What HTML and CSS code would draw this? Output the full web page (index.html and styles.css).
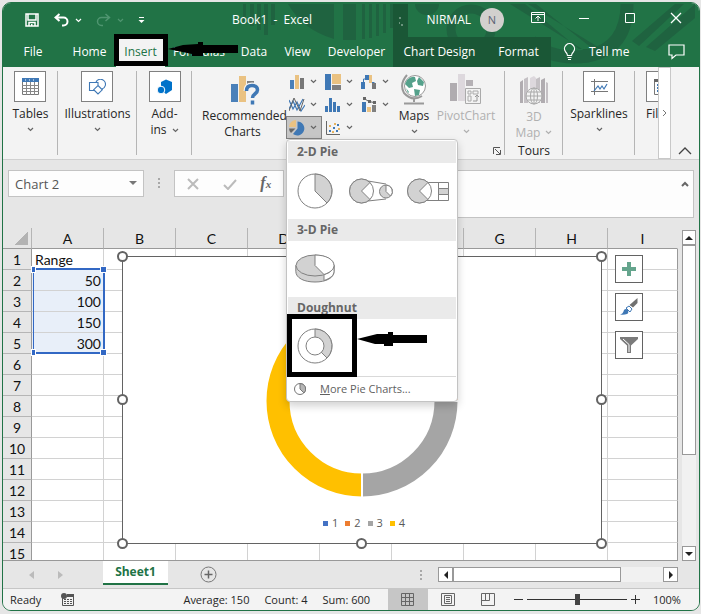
FILE: index.html
```html
<!DOCTYPE html>
<html lang="en">
<head>
<meta charset="utf-8">
<title>Book1 - Excel</title>
<link rel="stylesheet" href="styles.css">
</head>
<body>
<svg class="defs" aria-hidden="true">
  <symbol id="chev" viewBox="0 0 7 5"><path d="M1 1l2.500 2.500L6 1" fill="none" stroke="currentColor" stroke-width="1.200"/></symbol>
</svg>
<div class="window">
  <header class="top">
    <svg class="pattern" width="456" height="64" viewBox="0 0 456 64" aria-hidden="true">
      <g fill="#1f6340">
        <path d="M0 1h3v17H0zM7 1h4v22H7zM14 1h4v26h-4zM21 1h4v31h-4zM28 1h4v21h-4z"/>
        <path d="M45 1h46v35Q60 27 45 1zM100 1h13v36h-13zM119 1h3v35h-3zM126 1h3v34h-3zM133 1h3v32h-3zM140 1h3v29h-3zM147 1h3v24h-3zM154 1h3v15h-3z"/>
        <path d="M172 1h24a12 11 0 0 1-24 0z"/>
        <path d="M267 1h18l70 43v12zM282 1l54 45h14L293 1zM389 38L432 1h9l-45 42zM403 44L452 1v14L412 48z"/>
      </g>
      <circle cx="228" cy="26" r="20" fill="none" stroke="#1f6340" stroke-width="9"/>
      <path d="M384 1Q384 45 345 53Q308 58 288 38" fill="none" stroke="#1f6340" stroke-width="13"/>
      <path d="M150 1h15v33h-15z" fill="#1a5736"/>
      <path d="M156 15h2M156 20h1M158 22h2" stroke="#b8d0c2"/>
    </svg>
    <div class="titlebar">
      <div class="quick">
        <button aria-label="Save"><svg width="14" height="14" viewBox="0 0 14 14"><path d="M1 1h12v12H1zM3 1v6h8V1M4 13V9.500h6V13" fill="none" stroke="#fff" stroke-width="1.500"/><path d="M6 11h1.500v2H6z" fill="#fff"/></svg></button>
        <button class="undo" aria-label="Undo"><svg width="15" height="14" viewBox="0 0 15 14"><path d="M5.500 1L1.500 4.500l4 3.500M2 4.500h7.500a4 4 0 0 1 0 8H8" fill="none" stroke="#fff" stroke-width="2"/></svg><svg width="7" height="5"><use href="#chev"/></svg></button>
        <button class="undo redo" aria-label="Redo"><svg width="15" height="14" viewBox="0 0 15 14"><path d="M9.500 1l4 3.500-4 3.500M13 4.500H5.500a4 4 0 0 0 0 8H7" fill="none" stroke="currentColor" stroke-width="1.500"/></svg><svg width="7" height="5"><use href="#chev"/></svg></button>
        <button aria-label="Customize Quick Access Toolbar"><svg width="7" height="8" viewBox="0 0 7 8"><path d="M1 1.500h5" stroke="#fff"/><path d="M.5 4h6l-3 3z" fill="#fff"/></svg></button>
      </div>
      <h1 class="title">Book1&nbsp; - &nbsp;Excel</h1>
      <button class="account">NIRMAL <span class="avatar">N</span></button>
      <div class="controls">
        <button aria-label="Ribbon display options"><svg width="14" height="12" viewBox="0 0 14 12"><path d="M.5.5h13v10H.5zM.5 2.500h13M7 9V4M4.500 6.500L7 4l2.500 2.500" fill="none" stroke="#fff"/></svg></button>
        <button aria-label="Minimize"><svg width="12" height="12"><path d="M1 6.500h10" stroke="#fff"/></svg></button>
        <button aria-label="Maximize"><svg width="12" height="12"><path d="M1.500 1.500h9v9h-9z" fill="none" stroke="#fff"/></svg></button>
        <button aria-label="Close"><svg width="12" height="12"><path d="M1 1l10 10M11 1L1 11" stroke="#fff" stroke-width="1.300"/></svg></button>
      </div>
    </div>
    <nav class="tabs">
      <button>File</button><button>Home</button><button class="active">Insert</button><button>Formulas</button><button>Data</button><button>View</button><button>Developer</button><button class="context">Chart Design</button><button class="context">Format</button>
      <button class="tell"><svg width="13" height="18" viewBox="0 0 13 18"><path d="M4.500 12.500q0-2-2-3.800A5 5 0 1 1 10.500 8.700q-2 1.800-2 3.800zM4.500 14.500h4M5 16.500h3" fill="none" stroke="#fff" stroke-width="1.200"/></svg>Tell me</button>
      <button class="comment" aria-label="Comments"><svg width="17" height="16" viewBox="0 0 17 16"><path d="M1 1h15v10H8l-4 3.500V11H1z" fill="none" stroke="#fff" stroke-width="1.200"/></svg></button>
    </nav>
    <div class="mark mark-tab"></div>
    <svg class="arrow arrow-tab" width="70" height="14" viewBox="0 0 70 14"><path d="M0 7l15-4 15-1V0h5v3h35v8H35v3H24v-2z"/></svg>
  </header>

  <section class="ribbon">
    <div class="group">
      <button class="big"><span class="tile"><svg width="17" height="17" viewBox="0 0 17 17"><path d="M.5.5h16v16H.5z" fill="#fff" stroke="#777"/><path d="M0 0h17v4H0z" fill="#3f78b5"/><path d="M4.500 4v13M8.500 4v13M12.500 4v13M0 7.500h17M0 10.500h17M0 13.500h17" stroke="#888"/><path d="M3 2h1M7 2h1M11 2h1" stroke="#fff"/></svg></span>Tables<svg width="7" height="5"><use href="#chev"/></svg></button>
    </div>
    <div class="group g-ill">
      <button class="big"><span class="tile"><svg width="18" height="16" viewBox="0 0 18 16"><path d="M6 11.500H1.500v-8H10V6M8 3a5 5 0 1 1 6 7M10 6.500l4.300 4.300L10 15l-4.300-4.300z" fill="none" stroke="#3f78b5" stroke-width="1.100"/></svg></span>Illustrations<svg width="7" height="5"><use href="#chev"/></svg></button>
    </div>
    <div class="group">
      <button class="big"><span class="tile"><svg width="16" height="16" viewBox="0 0 16 16"><path d="M4 3l5-2.500L15 3v8l-6 4-5-4z" fill="#0072c9"/><circle cx="4" cy="11" r="3.800" fill="#0072c9" stroke="#fff"/></svg></span>Add-<span class="inline">ins <svg width="7" height="5"><use href="#chev"/></svg></span></button>
    </div>
    <div class="group g-charts">
      <button class="big rec"><svg width="30" height="30" viewBox="0 0 30 30"><path d="M1 9h7v18H1z" fill="#4a80b9"/><path d="M9 1h7v26H9z" fill="#eac282"/><path d="M17 6h7v4h-7z" fill="#808080"/><path d="M16.500 16q0-5.500 5.500-5.500t5.500 4.500c0 4-5 3.500-5 8" fill="none" stroke="#f3f3f3" stroke-width="6"/><path d="M16.500 16q0-5.500 5.500-5.500t5.500 4.500c0 4-5 3.500-5 8M22.500 25.500v4" fill="none" stroke="#3f78b5" stroke-width="3.500"/></svg>Recommended<br>Charts</button>
      <div class="gallery">
        <button aria-label="Column chart"><svg width="16" height="16" viewBox="0 0 16 16"><path d="M1 6h4v9H1z" fill="#4a80b9"/><path d="M6 1h4v14H6z" fill="#eac282"/><path d="M11 4h4v11h-4z" fill="#777"/></svg><svg width="7" height="5"><use href="#chev"/></svg></button>
        <button aria-label="Hierarchy chart"><svg width="16" height="16" viewBox="0 0 16 16"><path d="M0 0h6v16H0z" fill="#3f78b5"/><path d="M7 0h9v10H7z" fill="#eac282"/><path d="M7 11h9v5H7z" fill="#808080"/></svg><svg width="7" height="5"><use href="#chev"/></svg></button>
        <button aria-label="Waterfall chart"><svg width="16" height="16" viewBox="0 0 16 16"><path d="M0 8h4v7H0z" fill="#3f78b5"/><path d="M2.500 8V5h3V1.500h5v7h3" fill="none" stroke="#3f78b5"/><path d="M4 1h4v5H4z" fill="#3f78b5"/><path d="M8 1h3v8H8z" fill="#eac282"/><path d="M11 9h4v6h-4z" fill="#777"/></svg><svg width="7" height="5"><use href="#chev"/></svg></button>
        <button aria-label="Line chart"><svg width="16" height="16" viewBox="0 0 16 16"><path d="M0 12l4-8 4 9 6-11M0 3l4 9 4-7 4 9 4-6" fill="none" stroke="#3f78b5" stroke-width="1.200"/><path d="M0 14L5 1l6 13 4-12" fill="none" stroke="#666"/></svg><svg width="7" height="5"><use href="#chev"/></svg></button>
        <button aria-label="Histogram chart"><svg width="16" height="16" viewBox="0 0 16 16"><path d="M0 9h3v6H0zM4 1h3v14H4zM8 5h3v10H8zM12 9h3v6h-3z" fill="#3f78b5"/></svg><svg width="7" height="5"><use href="#chev"/></svg></button>
        <button aria-label="Combo chart"><svg width="16" height="16" viewBox="0 0 16 16"><path d="M1 5h4v10H1z" fill="#3f78b5"/><path d="M6 10h4v5H6z" fill="#eac282"/><path d="M11 8h4v7h-4z" fill="#808080"/><path d="M3 1.500l5 3 5 1" fill="none" stroke="#666"/><path d="M2 0h3v3H2zM7 3h3v3H7zM12 4h3v3h-3z" fill="#666"/></svg><svg width="7" height="5"><use href="#chev"/></svg></button>
        <button class="pressed" aria-label="Pie chart"><svg width="16" height="16" viewBox="0 0 16 16"><path d="M8 8V1a7 7 0 1 1-4.500 12.500z" fill="#3f78b5" transform="translate(.5 .5)"/><path d="M7 7V0a7 7 0 0 0-7 7z" fill="#eac282"/><path d="M6.500 8.500H0a7 7 0 0 0 2 4.500z" fill="#666"/></svg><svg width="7" height="5"><use href="#chev"/></svg></button>
        <button aria-label="Scatter chart"><svg width="16" height="16" viewBox="0 0 16 16"><path d="M1.500 1v13.500H15" fill="none" stroke="#666"/><path d="M4 10h2v2H4zM8 7h2v2H8zM11 10h2v2h-2zM12 4h2v2h-2z" fill="#3f78b5"/><path d="M4 5h2v2H4zM9 3h2v2H9zM7 11h2v2H7zM13 8h2v2h-2z" fill="#e6b35f"/></svg><svg width="7" height="5"><use href="#chev"/></svg></button>
        <div class="menu" role="menu">
          <h2>2-D Pie</h2>
          <div class="options">
            <button aria-label="Pie"><svg width="36" height="36" viewBox="0 0 36 36"><circle cx="18" cy="18" r="17" fill="#fff" stroke="#808080"/><path d="M18 18V1a17 17 0 0 1 12 29z" fill="#d2d2d2" stroke="#808080"/></svg></button>
            <button aria-label="Pie of Pie"><svg width="46" height="28" viewBox="0 0 46 28"><path d="M20 4l18 3M20 24l18-2" stroke="#808080"/><circle cx="13.500" cy="14" r="12" fill="#fff" stroke="#808080"/><path d="M13.500 14L22 5.500a12 12 0 1 0 0 17z" fill="#d2d2d2" stroke="#808080"/><circle cx="38" cy="14.500" r="6.500" fill="#d2d2d2" stroke="#808080"/><path d="M38 14.500V8a6.500 6.500 0 0 1 4.500 11z" fill="#fff" stroke="#808080"/></svg></button>
            <button aria-label="Bar of Pie"><svg width="44" height="28" viewBox="0 0 44 28"><path d="M20 5.500h22.500v18H20M32.500 5.500v18" fill="#fff" stroke="#808080"/><path d="M32.500 11.500h10v6h-10z" fill="#d2d2d2" stroke="#808080"/><circle cx="13.500" cy="14" r="12" fill="#fff" stroke="#808080"/><path d="M13.500 14L22 5.500a12 12 0 1 0 0 17z" fill="#d2d2d2" stroke="#808080"/></svg></button>
          </div>
          <h2>3-D Pie</h2>
          <div class="options">
            <button aria-label="3-D Pie"><svg class="pie3d" width="40" height="30" viewBox="0 0 40 30"><path d="M.8 11.500v6C1 24 9 28 20 28s19-4 19-10.500v-6z" fill="#d2d2d2" stroke="#808080"/><path d="M29 20v6.500c6-2 10-5 10-9v-6z" fill="#fff" stroke="#808080"/><ellipse cx="20" cy="11.500" rx="19" ry="10.500" fill="#d2d2d2" stroke="#808080"/><path d="M20 11.500V1c11 0 19 4.500 19 10.500 0 4-4 7-10 9z" fill="#fff" stroke="#808080"/></svg></button>
          </div>
          <h2>Doughnut</h2>
          <div class="options last">
            <button aria-label="Doughnut"><svg width="36" height="36" viewBox="0 0 36 36"><circle cx="18" cy="18" r="17" fill="#fff" stroke="#808080"/><path d="M18 18V1a17 17 0 0 1 12 29z" fill="#d2d2d2" stroke="#808080"/><circle cx="18" cy="18" r="9" fill="#fff" stroke="#808080"/></svg></button>
            <div class="mark mark-menu"></div>
            <svg class="arrow arrow-menu" width="70" height="14" viewBox="0 0 70 14"><path d="M0 7l20-5h11V0h5v3h34v8H36v3h-9v-2H18z"/></svg>
          </div>
          <button class="more"><svg width="12" height="12" viewBox="0 0 12 12"><circle cx="6" cy="6" r="5.500" fill="#fff" stroke="#777"/><path d="M6 6V.5a5.500 5.500 0 0 1 4 9.500z" fill="#b5b5b5" stroke="#777"/></svg><span><u>M</u>ore Pie Charts...</span></button>
        </div>
      </div>
      <button class="big maps"><svg width="26" height="32" viewBox="0 0 26 32"><circle cx="14" cy="13" r="10.500" fill="#fff" stroke="#999"/><path d="M6 7q4-4 8-3l1 4-4 2 1 4-4 1-4-4zM18 4l5 5-1 4-5-1-1-4zM13 16l6 1-1 5-4 1zM5 15l3 4-1 1z" fill="#55a18b"/><path d="M6 2Q-2 11 3 20q8 9 18 3M13 26v3M3 30.500h20" fill="none" stroke="#999" stroke-width="2"/></svg>Maps<svg width="7" height="5"><use href="#chev"/></svg></button>
      <button class="big pivot" disabled><svg width="32" height="32" viewBox="0 0 32 32"><path d="M0 10h7v18H0z" fill="#b0acb0"/><path d="M8 1h7v27H8z" fill="#ddd8dd"/><path d="M16 7h7v6h-7z" fill="#b5b1b5"/><path d="M15.500 15.500h15v15h-15z" fill="#f3f3f3" stroke="#aaa"/><path d="M18 18h3v3h-3zM23 18h5v3h-5zM18 23h3v5h-3z" fill="none" stroke="#aaa"/><path d="M23 28h4v-5M25 24l2-2 2 2" fill="none" stroke="#999"/></svg>PivotChart<svg width="7" height="5"><use href="#chev"/></svg></button>
      <button class="launcher" aria-label="See all charts"><svg width="8" height="8"><path d="M.5 7V.5H7M2 2l5 5M7.500 3v4.500H3" fill="none" stroke="#555"/></svg></button>
    </div>
    <div class="group g-tours">
      <button class="big tour" disabled><svg width="30" height="30" viewBox="0 0 30 30"><path d="M1 6l3-2v23H1zM22 4l4-2v25h-4z" fill="#b0acb0"/><path d="M5 3l4-2v26H5zM17 3l4-2v26h-4zM27 6l2 1v20h-2z" fill="#c4c0c4"/><path d="M11 2l4-2 2 2v25h-6z" fill="#ddd8dd"/><circle cx="15" cy="20" r="8" fill="#f3f3f3" stroke="#aaa"/><ellipse cx="15" cy="20" rx="3.500" ry="8" fill="none" stroke="#aaa"/><path d="M7 20h16M8.500 16h13M8.500 24h13M15 12v16" stroke="#aaa"/></svg>3D<span class="inline">Map <svg width="7" height="5"><use href="#chev"/></svg></span></button>
      <span class="caption">Tours</span>
    </div>
    <div class="group g-spark">
      <button class="big"><span class="tile"><svg width="17" height="16" viewBox="0 0 17 16"><path d="M3.500 0v16M0 2.500h17M0 12.500h17" stroke="#777"/><path d="M3 12l4-5 2 3 2-3 2 3 3-5" fill="none" stroke="#3f78b5" stroke-width="1.200"/></svg></span>Sparklines<svg width="7" height="5"><use href="#chev"/></svg></button>
    </div>
    <div class="group g-filter">
      <button class="big"><span class="tile"><svg width="16" height="16" viewBox="0 0 16 16"><path d="M.5.5h15v15H.5z" fill="#fff" stroke="#777"/><path d="M0 0h16v3H0z" fill="#666"/><path d="M3 5h9v2H3zM3 8h9v2H3zM3 11h9v2H3z" fill="#3f78b5"/></svg></span>Fil</button>
    </div>
    <button class="scroller" aria-label="Scroll ribbon right"><svg width="5" height="8"><path d="M1 1l3 3-3 3" fill="none" stroke="#777"/></svg></button>
    <button class="collapse" aria-label="Collapse ribbon"><svg width="14" height="8"><path d="M1 7l6-6 6 6" fill="none" stroke="#444" stroke-width="1.300"/></svg></button>
  </section>

  <section class="formula">
    <button class="namebox">Chart 2 <svg width="8" height="5"><path d="M0 0h8L4 4z" fill="#777"/></svg></button>
    <span class="dots"></span>
    <div class="fxbox">
      <button aria-label="Cancel"><svg width="12" height="12"><path d="M1 1l10 10M11 1L1 11" stroke="#bbb" stroke-width="2"/></svg></button>
      <button aria-label="Enter"><svg width="14" height="12"><path d="M1 7l4 4 8-9" fill="none" stroke="#bbb" stroke-width="2"/></svg></button>
      <button class="fx" aria-label="Insert function">f<small>x</small></button>
    </div>
    <div class="entry"><input aria-label="Formula bar"><svg width="8" height="6"><path d="M1 5l3-3 3 3" fill="none" stroke="#666" stroke-width="2"/></svg></div>
  </section>

  <main class="work">
    <div class="sheet">
      <table>
        <colgroup><col class="rowcol"><col><col><col><col><col><col><col><col><col class="lastcol"></colgroup>
        <thead><tr><th class="corner" aria-label="Select all"></th><th>A</th><th>B</th><th>C</th><th>D</th><th>E</th><th>F</th><th>G</th><th>H</th><th>I</th></tr></thead>
        <tbody>
          <tr><th>1</th><td class="text">Range</td><td></td><td></td><td></td><td></td><td></td><td></td><td></td><td></td></tr>
          <tr><th>2</th><td class="sel">50</td><td></td><td></td><td></td><td></td><td></td><td></td><td></td><td></td></tr>
          <tr><th>3</th><td class="sel">100</td><td></td><td></td><td></td><td></td><td></td><td></td><td></td><td></td></tr>
          <tr><th>4</th><td class="sel">150</td><td></td><td></td><td></td><td></td><td></td><td></td><td></td><td></td></tr>
          <tr><th>5</th><td class="sel">300</td><td></td><td></td><td></td><td></td><td></td><td></td><td></td><td></td></tr>
          <tr><th>6</th><td></td><td></td><td></td><td></td><td></td><td></td><td></td><td></td><td></td></tr>
          <tr><th>7</th><td></td><td></td><td></td><td></td><td></td><td></td><td></td><td></td><td></td></tr>
          <tr><th>8</th><td></td><td></td><td></td><td></td><td></td><td></td><td></td><td></td><td></td></tr>
          <tr><th>9</th><td></td><td></td><td></td><td></td><td></td><td></td><td></td><td></td><td></td></tr>
          <tr><th>10</th><td></td><td></td><td></td><td></td><td></td><td></td><td></td><td></td><td></td></tr>
          <tr><th>11</th><td></td><td></td><td></td><td></td><td></td><td></td><td></td><td></td><td></td></tr>
          <tr><th>12</th><td></td><td></td><td></td><td></td><td></td><td></td><td></td><td></td><td></td></tr>
          <tr><th>13</th><td></td><td></td><td></td><td></td><td></td><td></td><td></td><td></td><td></td></tr>
          <tr><th>14</th><td></td><td></td><td></td><td></td><td></td><td></td><td></td><td></td><td></td></tr>
          <tr><th>15</th><td></td><td></td><td></td><td></td><td></td><td></td><td></td><td></td><td></td></tr>
        </tbody>
      </table>
      <div class="range"><i></i><i></i><i></i><i></i></div>
      <div class="chart">
        <svg class="ring" width="194" height="194" viewBox="-97 -97 194 194" role="img" aria-label="Doughnut chart">
          <g fill="none" stroke-width="23">
            <path d="M0 -84A84 84 0 0 1 42 -72.700" stroke="#4472c4"/>
            <path d="M42 -72.700A84 84 0 0 1 84 0" stroke="#ed7d31"/>
            <path d="M84 0A84 84 0 0 1 0 84" stroke="#a5a5a5"/>
            <path d="M0 84A84 84 0 0 1 0 -84" stroke="#ffc000"/>
          </g>
          <path d="M0 70v27M0-70v-27M70 0h27M36-62l12-21" stroke="#fff" stroke-width="2"/>
        </svg>
        <ul class="legend"><li class="c1">1</li><li class="c2">2</li><li class="c3">3</li><li class="c4">4</li></ul>
        <b class="h tl"></b><b class="h tr"></b><b class="h ml"></b><b class="h mr"></b><b class="h bl"></b><b class="h bm"></b><b class="h br"></b>
        <div class="side">
          <button aria-label="Chart elements"><svg width="14" height="14"><path d="M5 0h4v5h5v4H9v5H5V9H0V5h5z" fill="#65a58d"/></svg></button>
          <button aria-label="Chart styles"><svg width="18" height="18" viewBox="0 0 18 18"><path d="M17.500 0v5L13 9.500 9.500 7z" fill="#707070"/><path d="M9 8l3 3-2 3-4-4z" fill="#fff" stroke="#3f78b5"/><path d="M0 16.500q3-.5 4-4.500 2-2 4 0 1 3-1 4-3 1-7 .5z" fill="#3f78b5"/></svg></button>
          <button aria-label="Chart filters"><svg width="18" height="17" viewBox="0 0 18 17"><path d="M0 0h18v2l-7 6.500V16H7V8.500L0 2z" fill="#7b7b7b"/><path d="M3 2l6 5.500V15" fill="none" stroke="#fff"/></svg></button>
        </div>
      </div>
    </div>
    <div class="vscroll">
      <button aria-label="Scroll up"><svg width="8" height="4"><path d="M0 4l4-4 4 4z" fill="#222"/></svg></button>
      <div class="vthumb"></div><div class="track"></div>
      <button aria-label="Scroll down"><svg width="8" height="4"><path d="M0 0h8L4 4z" fill="#222"/></svg></button>
    </div>
  </main>

  <div class="sheetbar">
    <div class="nav"><button aria-label="Previous sheet"><svg width="5" height="8"><path d="M5 0v8L0 4z" fill="#bbb"/></svg></button><button aria-label="Next sheet"><svg width="5" height="8"><path d="M0 0v8l5-4z" fill="#bbb"/></svg></button></div>
    <button class="tab">Sheet1</button>
    <button class="add" aria-label="New sheet"><svg width="17" height="17"><circle cx="8.500" cy="8.500" r="7.500" fill="none" stroke="#777"/><path d="M4.500 8.500h8M8.500 4.500v8" stroke="#666" stroke-width="1.500"/></svg></button>
    <span class="dots"></span>
    <div class="hscroll">
      <button aria-label="Scroll left"><svg width="4" height="8"><path d="M4 0v8L0 4z" fill="#222"/></svg></button>
      <div class="hthumb"></div><div class="track"></div>
      <button aria-label="Scroll right"><svg width="4" height="8"><path d="M0 0v8l4-4z" fill="#222"/></svg></button>
    </div>
  </div>

  <footer class="status">
    <span class="ready">Ready</span>
    <svg class="macro" width="14" height="14" viewBox="0 0 14 14"><path d="M1.500 5v7.500h11v-11H7" fill="none" stroke="#555"/><path d="M6 1h7v3H6z" fill="#555"/><circle cx="3" cy="3" r="3" fill="#555"/><path d="M3 6.500h9M3 8.500h9M3 10.500h9" stroke="#555" stroke-dasharray="2 1"/></svg>
    <div class="sums"><span>Average: 150</span><span>Count: 4</span><span>Sum: 600</span></div>
    <div class="views">
      <button class="on" aria-label="Normal view"><svg width="14" height="13"><path d="M.5.5h12v12H.5zM4.500.5v12M8.500.5v12M.5 4.500h12M.5 8.500h12" fill="none" stroke="#666"/></svg></button>
      <button aria-label="Page layout view"><svg width="14" height="13"><path d="M.5.5h13v12H.5zM3.500 2.500h7v8h-7zM5 4.500h4M5 6.500h4M5 8.500h4" fill="none" stroke="#666"/></svg></button>
      <button aria-label="Page break preview"><svg width="14" height="13"><path d="M.5.500h13v12H.5zM.5 7.500h8v-7M4.500.5v7" fill="none" stroke="#666"/></svg></button>
    </div>
    <div class="zoom"><button aria-label="Zoom out"><svg width="9" height="9"><path d="M0 4.500h9" stroke="#333"/></svg></button><input type="range" min="0" max="200" value="100" aria-label="Zoom"><button aria-label="Zoom in"><svg width="9" height="9"><path d="M0 4.500h9M4.500 0v9" stroke="#333"/></svg></button><span>100%</span></div>
  </footer>
</div>
</body>
</html>
```
FILE: styles.css
```css
* { box-sizing: border-box; }
body {
  margin: 0;
  height: 100vh;
  padding: 2px 1px 3px 2px;
  background: #e6e6e6;
  font: 12px/16px "Open Sans", "Noto Sans", sans-serif;
  color: #262626;
}
button { margin: 0; padding: 0; border: 0; background: none; font: inherit; color: inherit; }
svg { display: block; flex: none; }
.defs { position: absolute; width: 0; height: 0; }
.window {
  display: flex;
  flex-direction: column;
  height: 100%;
  border: 1px solid #217346;
  border-radius: 9px;
  background: #e6e6e6;
  overflow: hidden;
}

/* title bar and tabs */
.top { position: relative; z-index: 2; flex: none; background: #217346; color: #fff; }
.pattern { position: absolute; right: 0; top: 0; }
.titlebar { position: relative; display: flex; align-items: center; height: 34px; }
.quick { display: flex; align-items: center; width: 190px; padding-left: 22px; gap: 15px; }
.quick > button { display: flex; align-items: center; gap: 6px; }
.quick > .undo { width: 27px; }
.quick > .redo { color: #4f9570; margin-right: 0; }
.title { width: 158px; margin: 0; font: inherit; text-align: center; white-space: nowrap; }
.account { display: flex; align-items: center; gap: 9px; margin: 0 11px 0 auto; }
.avatar { width: 24px; height: 24px; border-radius: 50%; background: #d2d0ce; color: #5d6275; line-height: 24px; text-align: center; font-size: 11px; }
.controls { display: flex; align-self: stretch; }
.controls button { display: grid; place-items: center; width: 46px; height: 30px; }
.tabs {
  position: relative;
  display: grid;
  grid-template-columns: 60px 53px 49px 68px 42px 45px 73px 93px 65px 1fr 46px;
  height: 30px;
}
.tabs button { white-space: nowrap; }
.tabs .active { background: #f3f3f3; color: #217346; }
.tabs .context { background: #1a5736; }
.tabs .tell { display: flex; align-items: center; gap: 13px; padding-left: 12px; }
.tabs .comment { display: grid; place-items: center; }
.mark { position: absolute; border: 5px solid #000; }
.mark-tab { left: 111px; top: 31px; width: 54px; height: 32px; }
.arrow { position: absolute; }
.arrow-tab { left: 165px; top: 39px; }

/* ribbon */
.ribbon { position: relative; z-index: 3; display: flex; flex: none; height: 93px; background: #f3f3f3; border-bottom: 1px solid #d0d0d0; }
.group { position: relative; flex: none; width: 55px; display: flex; justify-content: center; }
.group::after { content: ""; position: absolute; right: 0; top: 4px; bottom: 4px; width: 1px; background: #b5b5b5; }
.big { display: flex; flex-direction: column; align-items: center; align-self: flex-start; padding-top: 4px; white-space: nowrap; }
.big > svg:last-child { margin-top: 5px; }
.big:disabled { color: #b0b0b0; }
.group svg { color: #666; }
.group :disabled svg { color: #b0b0b0; }
.tile { display: grid; place-items: center; width: 32px; height: 31px; margin-bottom: 4px; background: #fff; border: 1px solid #808080; }
.inline { display: flex; align-items: center; gap: 5px; }
.g-ill { width: 79px; }
.g-charts { width: 313px; justify-content: flex-start; padding-left: 10px; }
.rec { display: block; width: 81px; padding-top: 8px; text-align: center; }
.rec svg { margin: 0 auto 3px 28px; }
.gallery { position: relative; display: grid; grid-template-columns: repeat(3, 36px); grid-template-rows: repeat(3, 23px); align-self: flex-start; padding-top: 3px; margin-left: 3px; }
.gallery > button { display: flex; align-items: center; gap: 5px; padding-left: 3px; }
.gallery > .pressed { background: #c6c6c6; border: 1px solid #808080; padding-left: 2px; }
.maps { position: absolute; left: 202px; width: 40px; padding-top: 6px; }
.pivot { position: absolute; left: 242px; width: 64px; padding-top: 6px; }
.maps > svg:first-child, .pivot > svg:first-child { margin-bottom: 3px; }
.launcher { position: absolute; left: 301px; top: 80px; }
.g-tours { width: 58px; flex-direction: column; align-items: center; }
.tour { align-self: center; padding-top: 8px; }
.tour > svg { margin-bottom: 3px; }
.caption { margin-top: 2px; }
.g-spark { width: 72px; }
.g-filter { flex: 0 1 23px; min-width: 0; justify-content: flex-start; overflow: hidden; padding-left: 11px; }
.g-filter .big { align-items: flex-start; }
.g-filter::after { display: none; }
.scroller { display: grid; place-items: center; width: 13px; background: #fff; border: 1px solid #c8c8c8; }
.collapse { flex: 1; display: grid; justify-items: center; align-items: end; padding-bottom: 4px; }

/* pie chart menu */
.menu {
  position: absolute;
  left: 0;
  top: 72px;
  width: 172px;
  padding: 1px;
  background: #fff;
  border: 1px solid #c3c3c3;
  border-radius: 4px;
  box-shadow: 0 4px 9px rgba(0, 0, 0, .18);
  color: #5f5f5f;
}
.menu h2 { margin: 0; padding: 0 9px; height: 22px; background: #eaeaea; font: bold 12px/22px "Open Sans", "Noto Sans", sans-serif; color: #666; }
.options { position: relative; display: flex; align-items: center; gap: 15px; height: 56px; padding-left: 9px; }
.options .pie3d { margin-left: -2px; }
.options button + button + button { margin-left: -3px; }
.options.last { height: 57px; padding-bottom: 4px; }
.more { display: flex; align-items: center; gap: 14px; width: 100%; height: 24px; padding-left: 6px; border-top: 1px solid #d9d9d9; white-space: nowrap; font-size: 11px; }
.mark-menu { left: -1px; top: -5px; width: 70px; height: 63px; }
.arrow-menu { left: 69px; top: 13px; }

/* formula bar */
.formula { display: flex; flex: none; align-items: flex-start; height: 68px; padding: 10px 5px 0; }
.namebox { display: flex; align-items: center; justify-content: space-between; width: 136px; height: 27px; padding: 0 6px; background: #fdfdfd; border: 1px solid #c3c3c3; color: #555; font-size: 13px; }
.dots { width: 2px; height: 10px; background: repeating-linear-gradient(#a8a8a8 0 2px, transparent 2px 4px); }
.formula .dots { margin: 8px 14px; }
.fxbox { display: flex; align-items: center; justify-content: space-around; width: 110px; height: 27px; background: #fdfdfd; border: 1px solid #c3c3c3; }
.fx { font: italic bold 16px/20px "Liberation Serif", serif; color: #666; }
.fx small { font-size: 11px; }
.entry { flex: 1; display: flex; height: 48px; margin-left: 3px; padding: 10px 4px; background: #fdfdfd; border: 1px solid #c3c3c3; }
.entry input { flex: 1; min-width: 0; border: 0; padding: 0; background: none; }

/* worksheet */
.work { display: flex; flex: 1; min-height: 0; }
.sheet { position: relative; flex: 1; min-width: 0; overflow: hidden; border-bottom: 1px solid #999; }
table { width: 100%; table-layout: fixed; border-collapse: separate; border-spacing: 0; font: 14px/18px Lato, "Open Sans", sans-serif; color: #111; }
col { width: 72px; }
.rowcol { width: 29px; }
.lastcol { width: auto; }
th, td { height: 21px; padding: 2px 0 0; overflow: hidden; border-right: 1px solid #d2d2d2; border-bottom: 1px solid #d2d2d2; }
td { background: #fff; padding: 2px 2px 0 3px; text-align: right; }
td:last-child { border-right-color: #999; }
th { font-weight: normal; background: #e6e6e6; border-right-color: #999; border-bottom-color: #b5b5b5; }
thead th { border-bottom-color: #999; border-right-color: #b5b5b5; }
thead th:last-child { border-right-color: #e6e6e6; }
.corner { background: linear-gradient(135deg, #e6e6e6 50%, #b3b3b3 50%) 12px 4px / 13px 13px no-repeat #e6e6e6; }
.text { text-align: left; }
.sel { background: #e8eff9; }
.range { position: absolute; left: 30px; top: 40px; width: 72px; height: 86px; border: 2px solid #3268c4; border-left-width: 1px; }
.range i { position: absolute; width: 5px; height: 5px; background: #3268c4; border: 1px solid #fff; box-sizing: content-box; }
.range i:nth-child(odd) { left: -3px; width: 3px; }
.range i:nth-child(even) { right: -4px; }
.range i:nth-child(-n+2) { top: -4px; }
.range i:nth-child(n+3) { bottom: -4px; }
.chart { position: absolute; left: 119px; top: 28px; width: 480px; height: 288px; background: #fff; border: 1px solid #636363; }
.ring { position: absolute; left: 142px; top: 47px; }
.legend { position: absolute; left: 0; right: 0; bottom: 12px; display: flex; justify-content: center; gap: 7px; margin: 0; padding: 0 0 0 4px; list-style: none; color: #595959; font-size: 11px; }
.legend li { display: flex; align-items: center; gap: 4px; }
.legend li::before { content: ""; width: 5px; height: 5px; background: currentColor; }
.c1::before { color: #4472c4; }
.c2::before { color: #ed7d31; }
.c3::before { color: #a5a5a5; }
.c4::before { color: #ffc000; }
.h { position: absolute; width: 11px; height: 11px; margin: -6px; border: 2px solid #636363; border-radius: 50%; background: #fff; }
.tl, .tr { top: 0; }
.ml, .mr { top: 50%; }
.bl, .bm, .br { top: 100%; margin-top: -5px; }
.tl, .ml, .bl { left: 0; }
.bm { left: 50%; }
.tr, .mr, .br { left: 100%; margin-left: -5px; }
.side { position: absolute; left: 492px; top: -2px; display: grid; gap: 10px; }
.side button { display: grid; place-items: center; width: 28px; height: 28px; background: #fff; border: 1px solid #636363; }
.vscroll { display: flex; flex-direction: column; width: 21px; padding: 2px 3px 0 4px; }
.vscroll button, .hscroll button { flex: none; display: grid; place-items: center; width: 15px; height: 15px; background: #fff; border: 1px solid #999; }
.vscroll button { width: 14px; }
.vthumb { height: 210px; background: #fff; border: 1px solid #999; }
.track { flex: 1; background: #f1f1f1; }

/* sheet tabs */
.sheetbar { display: flex; flex: none; align-items: center; height: 27px; }
.nav { display: flex; justify-content: flex-end; gap: 24px; width: 100px; padding-right: 40px; }
.tab { align-self: flex-start; height: 24px; width: 65px; background: #fff; border-bottom: 2px solid #217346; color: #217346; font-weight: bold; }
.add { margin: 0 auto 0 32px; }
.hscroll { display: flex; width: 240px; margin: 0 21px 0 16px; }
.hthumb { width: 168px; background: #fff; border: 1px solid #999; }

/* status bar */
.status { display: flex; flex: none; align-items: center; height: 22px; background: #f3f3f3; border-top: 1px solid #c6c6c6; font-size: 11px; }
.ready { width: 58px; padding-left: 7px; }
.sums { flex: 1; display: flex; justify-content: flex-end; gap: 15px; padding-right: 18px; white-space: nowrap; }
.views { display: flex; align-self: stretch; }
.views button { display: grid; place-items: center; width: 40px; }
.views .on { background: #c6c6c6; }
.zoom { display: flex; align-items: center; width: 191px; padding-left: 6px; }
.zoom input { appearance: none; width: 100px; height: 15px; margin: 0 4px; background: linear-gradient(#333, #333) 0 7px / 100% 1px no-repeat; }
.zoom input::-webkit-slider-thumb { appearance: none; width: 5px; height: 11px; background: #444; }
.zoom span { margin-left: 13px; }
```
